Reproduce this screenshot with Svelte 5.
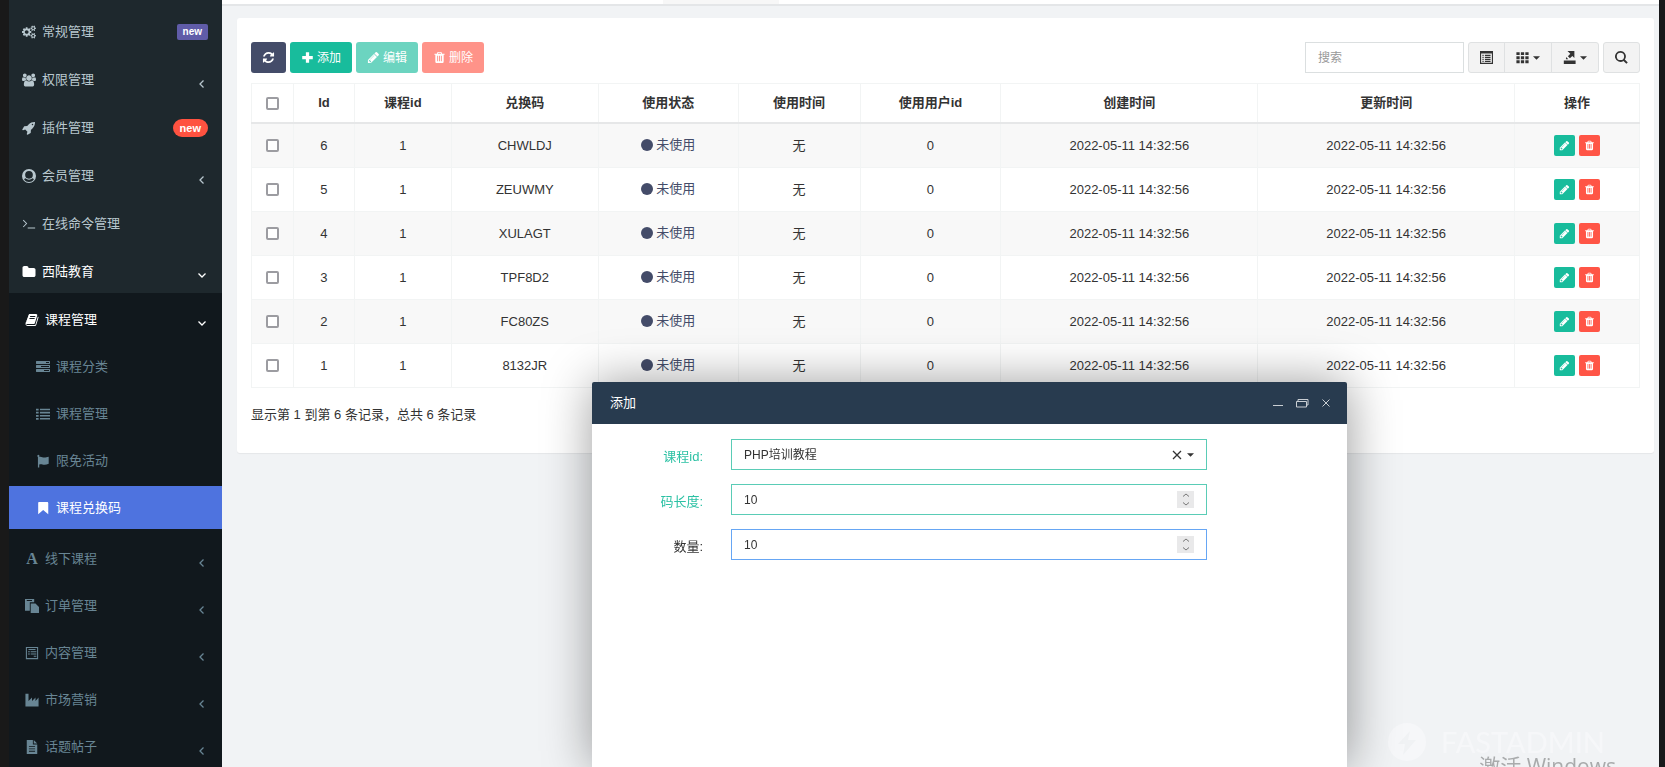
<script>
	const icons = {
		cogs: {
			box: '0 0 1920 1792',
			d: 'M896 896q0-106-75-181t-181-75-181 75-75 181 75 181 181 75 181-75 75-181zm768 512q0-52-38-90t-90-38-90 38-38 90q0 53 37.5 90.5t90.5 37.5 90.5-37.5 37.5-90.5zm0-1024q0-52-38-90t-90-38-90 38-38 90q0 53 37.5 90.5t90.5 37.5 90.5-37.5 37.5-90.5zm-384 421v185q0 10-7 19.5t-16 10.5l-155 24q-11 35-32 76 34 48 90 115 7 11 7 20 0 12-7 19-23 30-82.5 89.5t-78.5 59.5q-11 0-21-7l-115-90q-37 19-77 31-11 108-23 155-7 24-30 24h-186q-11 0-20-7.5t-10-17.5l-23-153q-34-10-75-31l-118 89q-7 7-20 7-11 0-21-8-144-133-144-160 0-9 7-19 10-14 41-53t47-61q-23-44-35-82l-152-24q-10-1-17-9.5t-7-19.5v-185q0-10 7-19.5t16-10.5l155-24q11-35 32-76-34-48-90-115-7-11-7-20 0-12 7-20 22-30 82-89t79-59q11 0 21 7l115 90q34-18 77-32 11-108 23-154 7-24 30-24h186q11 0 20 7.5t10 17.5l23 153q34 10 75 31l118-89q8-7 20-7 11 0 21 8 144 133 144 160 0 8-7 19-12 16-42 54t-45 60q23 48 34 82l152 23q10 2 17 10.5t7 19.5zm640 533v140q0 16-149 31-12 27-30 52 51 113 51 138 0 4-4 7-122 71-124 71-8 0-46-47t-52-68q-20 2-30 2t-30-2q-14 21-52 68t-46 47q-2 0-124-71-4-3-4-7 0-25 51-138-18-25-30-52-149-15-149-31v-140q0-16 149-31 13-29 30-52-51-113-51-138 0-4 4-7 4-2 35-20t59-34 30-16q8 0 46 46.5t52 67.5q20-2 30-2t30 2q51-71 92-112l6-2q4 0 124 70 4 3 4 7 0 25-51 138 17 23 30 52 149 15 149 31zm0-1024v140q0 16-149 31-12 27-30 52 51 113 51 138 0 4-4 7-122 71-124 71-8 0-46-47t-52-68q-20 2-30 2t-30-2q-14 21-52 68t-46 47q-2 0-124-71-4-3-4-7 0-25 51-138-18-25-30-52-149-15-149-31v-140q0-16 149-31 13-29 30-52-51-113-51-138 0-4 4-7 4-2 35-20t59-34 30-16q8 0 46 46.5t52 67.5q20-2 30-2t30 2q51-71 92-112l6-2q4 0 124 70 4 3 4 7 0 25-51 138 17 23 30 52 149 15 149 31z'
		},
		users: {
			box: '0 0 1920 1792',
			d: 'M593 896q-162 5-265 128H194q-82 0-138-40.5T0 865q0-353 124-353 6 0 43.5 21t97.5 42.5T384 597q67 0 133-23-5 37-5 66 0 139 81 256zm1071 637q0 120-73 189.5t-194 69.5H523q-121 0-194-69.5T256 1533q0-53 3.5-103.5t14-109T300 1212t43-97.5 62-81 85.5-53.5T602 960q10 0 43 21.5t73 48 107 48 135 21.5 135-21.5 107-48 73-48 43-21.5q61 0 111.5 20t85.5 53.5 62 81 43 97.5 26.5 108.5 14 109 3.5 103.5zM640 256q0 106-75 181t-181 75-181-75-75-181 75-181T384 0t181 75 75 181zm704 384q0 159-112.5 271.5T960 1024 688.5 911.5 576 640t112.5-271.5T960 256t271.5 112.5T1344 640zm576 225q0 78-56 118.5t-138 40.5h-134q-103-123-265-128 81-117 81-256 0-29-5-66 66 23 133 23 59 0 119-21.5t97.5-42.5 43.5-21q124 0 124 353zm-128-609q0 106-75 181t-181 75-181-75-75-181 75-181 181-75 181 75 75 181z'
		},
		rocket: {
			box: '0 0 1792 1792',
			d: 'M1440 448q0-40-28-68t-68-28-68 28-28 68 28 68 68 28 68-28 28-68zm224-288q0 249-75.5 430.5t-253.5 360.5q-81 80-195 176l-20 379q-2 16-16 26l-384 224q-7 4-16 4-12 0-23-9l-64-64q-13-14-8-32l85-276-281-281-276 85q-3 1-9 1-14 0-23-9l-64-64q-17-19-5-39l224-384q10-14 26-16l379-20q96-114 176-195 188-187 358-258t431-71q14 0 24 9.5t10 22.5z'
		},
		user: {
			box: '0 0 16 16',
			d: 'M8 0a8 8 0 1 1 0 16A8 8 0 0 1 8 0zM8 2.200a4.400 4.400 0 1 0 0 8.800 4.400 4.400 0 0 0 0-8.800zM4 10.600C3 10.900 2.700 11.500 2.500 12.300A6.900 6.900 0 0 0 8 14.900a6.900 6.900 0 0 0 5.500-2.600C13.300 11.500 13 10.900 12 10.600a5.700 5.700 0 0 1-8 0z'
		},
		terminal: {
			box: '0 0 16 16',
			d: 'M1 4l.8-.8L6 7.5 1.8 11.800 1 11l3.500-3.500zM6.500 12H15v1.200H6.500z'
		},
		folder: {
			box: '0 0 1792 1792',
			d: 'M1728 608v704q0 92-66 158t-158 66H288q-92 0-158-66t-66-158V352q0-92 66-158t158-66h320q92 0 158 66t66 158v32h672q92 0 158 66t66 158z'
		},
		book: {
			box: '0 0 1792 1792',
			d: 'M1703 478q40 57 18 129l-275 906q-19 64-76.5 107.5T1247 1664H324q-77 0-148.500-53.500T76 1479q-24-67-2-127 0-4 3-27t4-37q1-8-3-21.500t-3-19.500q2-11 8-21t16.500-23.500T116 1179q23-38 45-91.500t30-91.500q3-10 .5-30t-.5-28q3-11 17-28t17-23q21-36 42-92t25-90q1-9-2.500-32t.5-28q4-13 22-30.500t22-22.500q19-26 42.500-84.500T404 411q1-8-3-25.500t-2-26.500q2-8 9-18t18-23 17-21q8-12 16.500-30.500t15-35 16-36 19.500-32 26.500-23.500 36-11.500T620 134l-1 3q38-9 51-9h761q74 0 114 56t18 130l-274 906q-36 119-71.500 153.500T1089 1408H220q-27 0-38 15-11 16-1 43 24 70 144 70h923q29 0 56-15.500t35-41.500l300-987q7-22 5-57 38 15 59 43zm-1064 2q-4 13 2 22.500t20 9.500h608q13 0 25.500-9.500T1311 480l21-64q4-13-2-22.500t-20-9.500H702q-13 0-25.500 9.500T660 416zm-83 256q-4 13 2 22.500t20 9.500h608q13 0 25.500-9.500t16.500-22.500l21-64q4-13-2-22.500t-20-9.500H619q-13 0-25.500 9.500T577 672z'
		},
		tasks: {
			box: '0 0 1792 1792',
			d: 'M1024 1408h640v-128h-640v128zm-384-512h1024V768H640v128zm640-512h384V256h-384v128zm512 832v256q0 26-19 45t-45 19H64q-26 0-45-19t-19-45v-256q0-26 19-45t45-19h1664q26 0 45 19t19 45zm0-512v256q0 26-19 45t-45 19H64q-26 0-45-19T0 960V704q0-26 19-45t45-19h1664q26 0 45 19t19 45zm0-512v256q0 26-19 45t-45 19H64q-26 0-45-19T0 448V192q0-26 19-45t45-19h1664q26 0 45 19t19 45z'
		},
		list: {
			box: '0 0 16 16',
			d: 'M0 2h3v2H0zm0 3.500h3v2H0zM0 9h3v2H0zm0 3.500h3v2H0zM4.500 2H16v1.800H4.500zm0 3.500H16v1.800H4.500zm0 3.500H16v1.800H4.500zm0 3.500H16v1.800H4.500z'
		},
		flag: {
			box: '0 0 16 16',
			d: 'M2.500.8a1.500 1.500 0 0 1 1 2.600c2.500-1 4 .9 6.200.7 1.500-.1 2.800-.6 4.800-1.100v8.200c-2 .7-3.500 1.200-5 1.100-2.200-.1-3.500-1.300-5.800-.3V15.500H2.200V3.500A1.500 1.500 0 0 1 2.500.8z'
		},
		bookmark: {
			box: '0 0 16 16',
			d: 'M3.500 1h9.300c.7 0 1.200.5 1.200 1.200V15L8.200 10.300 2.500 15V2.200c0-.7.400-1.200 1-1.200z'
		},
		paste: {
			box: '0 0 16 16',
			d: 'M0 0h10.500v3.800H5.500V13.500H0zM2 1.200v1h6v-1zM6.500 5h5.500l4 4v7H6.500zM11 6.200V10h3.800v4.800H14.800V10H11z'
		},
		form: {
			box: '0 0 16 16',
			d: 'M1 1h14v14H1zm1.200 1.200v11.600h11.600V2.200zM4 3.500h8v1.200H4zM3.500 6h2v1.200h-2zm3 0H13v1.200H6.500zm-3 2.500h2v1.200h-2zm3 0H13v1.200H6.500zm3.500 2.500h3v1.200h-3z'
		},
		industry: {
			box: '0 0 16 16',
			d: 'M.5.800h3.500v8.200l4-3.800V9l4-3.800V9l3.500-3.800V15.500H.5z'
		},
		file: {
			box: '0 0 16 16',
			d: 'M2 0h7v5h5v11H2zm8 0l4 4h-4zM4.500 7v1.100h7V7zm0 2.600v1.100h7V9.600zm0 2.600v1.100h7v-1.100z'
		},
		refresh: {
			box: '0 0 1792 1792',
			d: 'M1639 1056q0 5-1 7-64 268-268 434.500T892 1664q-146 0-282.500-55T366 1452l-129 129q-19 19-45 19t-45-19-19-45v-448q0-26 19-45t45-19h448q26 0 45 19t19 45-19 45l-137 137q71 66 161 102t187 36q134 0 250-65t186-179q11-17 53-117 8-23 30-23h192q13 0 22.500 9.500t9.500 22.500zm25-800v448q0 26-19 45t-45 19h-448q-26 0-45-19t-19-45 19-45l138-138Q1097 384 896 384q-134 0-250 65T460 628q-11 17-53 117-8 23-30 23H178q-13 0-22.500-9.500T146 736v-7q65-268 270-434.500T896 128q146 0 284 55.500T1425 340l130-129q19-19 45-19t45 19 19 45z'
		},
		plus: {
			box: '0 0 16 16',
			d: 'M6 1.500h4V6h4.500v4H10v4.500H6V10H1.500V6H6z'
		},
		pencil: {
			box: '0 0 1792 1792',
			d: 'M491 1536l91-91-235-235-91 91v107h128v128h107zm523-928q0-22-22-22-10 0-17 7l-542 542q-7 7-7 17 0 22 22 22 10 0 17-7l542-542q7-7 7-17zm-54-192l416 416-832 832H128v-416zm683 96q0 53-37 90l-166 166-416-416 166-165q36-38 90-38 53 0 91 38l235 234q37 39 37 91z'
		},
		trash: {
			box: '0 0 1792 1792',
			d: 'M704 1376V672q0-14-9-23t-23-9h-64q-14 0-23 9t-9 23v704q0 14 9 23t23 9h64q14 0 23-9t9-23zm256 0V672q0-14-9-23t-23-9h-64q-14 0-23 9t-9 23v704q0 14 9 23t23 9h64q14 0 23-9t9-23zm256 0V672q0-14-9-23t-23-9h-64q-14 0-23 9t-9 23v704q0 14 9 23t23 9h64q14 0 23-9t9-23zM672 384h448l-48-117q-7-9-17-11H738q-10 2-17 11zm928 32v64q0 14-9 23t-23 9h-96v948q0 83-47 143.500t-113 60.500H480q-66 0-113-58.500T320 1464V512h-96q-14 0-23-9t-9-23v-64q0-14 9-23t23-9h309l70-167q15-37 54-63t79-26h320q40 0 79 26t54 63l70 167h309q14 0 23 9t9 23z'
		},
		listAlt: {
			box: '0 0 16 16',
			d: 'M0 0h16v16H0zm1.400 3v11.600h13.200V3zM3 4.500h1.500V6H3zm3 0h7V6H6zM3 7h1.500v1.500H3zm3 0h7v1.500H6zM3 9.500h1.500V11H3zm3 0h7V11H6zM3 12h1.500v1.500H3zm3 0h7v1.500H6z'
		},
		grid: {
			box: '0 0 16 16',
			d: 'M.5 1.500h4v3.500h-4zm5.500 0h4v3.500H6zm5.500 0h4v3.500h-4zm-11 5h4V10h-4zm5.500 0h4V10H6zm5.500 0h4V10h-4zm-11 5h4V15h-4zm5.500 0h4V15H6zm5.500 0h4V15h-4z'
		},
		exportIcon: {
			box: '0 0 16 16',
			d: 'M5.500 0H14v8.500l-2.500-2.500-3 3L6 6.500l3-3zM4 7.500L6.500 10H3.500zM1 11.800h14.500V16H1z'
		},
		search: {
			box: '0 0 16 16',
			d: 'M6.700 0a6.700 6.700 0 0 1 5.400 10.600l3.600 3.500-1.700 1.700-3.600-3.500A6.700 6.700 0 1 1 6.700 0zm0 2.200a4.500 4.500 0 1 0 0 9 4.500 4.500 0 0 0 0-9z'
		}
	};

	const topMenu = [
		{ icon: 'cogs', label: '常规管理', badge: 'purple' },
		{ icon: 'users', label: '权限管理', arrow: 'left' },
		{ icon: 'rocket', label: '插件管理', badge: 'red' },
		{ icon: 'user', label: '会员管理', arrow: 'left' },
		{ icon: 'terminal', label: '在线命令管理' },
		{ icon: 'folder', label: '西陆教育', arrow: 'down', open: true }
	];

	const courseMenu = [
		{ icon: 'tasks', label: '课程分类' },
		{ icon: 'list', label: '课程管理' },
		{ icon: 'flag', label: '限免活动' },
		{ icon: 'bookmark', label: '课程兑换码', active: true }
	];

	const subMenu = [
		{ icon: 'book', label: '课程管理', arrow: 'down', open: true, children: courseMenu },
		{ icon: 'font', label: '线下课程', arrow: 'left' },
		{ icon: 'paste', label: '订单管理', arrow: 'left' },
		{ icon: 'form', label: '内容管理', arrow: 'left' },
		{ icon: 'industry', label: '市场营销', arrow: 'left' },
		{ icon: 'file', label: '话题帖子', arrow: 'left' }
	];

	const columns = [
		{ title: '', share: 42 },
		{ title: 'Id', share: 61 },
		{ title: '课程id', share: 97 },
		{ title: '兑换码', share: 147 },
		{ title: '使用状态', share: 140 },
		{ title: '使用时间', share: 122 },
		{ title: '使用用户id', share: 141 },
		{ title: '创建时间', share: 257 },
		{ title: '更新时间', share: 257 },
		{ title: '操作', share: 125 }
	];
	const total = columns.reduce((sum, c) => sum + c.share, 0);

	const time = '2022-05-11 14:32:56';
	const rows = [
		{ id: 6, code: 'CHWLDJ' },
		{ id: 5, code: 'ZEUWMY' },
		{ id: 4, code: 'XULAGT' },
		{ id: 3, code: 'TPF8D2' },
		{ id: 2, code: 'FC80ZS' },
		{ id: 1, code: '8132JR' }
	];

	let selected = $state([]);
	let keyword = $state('');
	let course = $state('php');
	let codeLength = $state(10);
	let count = $state(10);

	function toggleAll(e) {
		selected = e.currentTarget.checked ? rows.map((r) => r.id) : [];
	}
</script>

{#snippet icon(name)}
	{#if name === 'font'}
		<span class="icon letter" aria-hidden="true">A</span>
	{:else}
		<svg class="icon" viewBox={icons[name].box} fill="currentColor" fill-rule="evenodd" aria-hidden="true">
			<path d={icons[name].d} />
		</svg>
	{/if}
{/snippet}

{#snippet caret()}
	<svg class="caret" viewBox="0 0 8 4" aria-hidden="true"><path d="M0 0h8L4 4z" fill="currentColor" /></svg>
{/snippet}

{#snippet link(item)}
	<a href="#menu" class:open={item.open} class:active={item.active}>
		{@render icon(item.icon)}
		<span class="label">{item.label}</span>
		{#if item.badge}
			<span class="badge {item.badge}">new</span>
		{:else if item.arrow}
			<svg class="arrow" viewBox="0 0 10 10" fill="none" stroke="currentColor" stroke-width="1.3" aria-hidden="true">
				<path d={item.arrow === 'left' ? 'M6.500 1.500L3 5l3.500 3.500' : 'M1.500 2.500L5 6l3.500-3.500'} />
			</svg>
		{/if}
	</a>
{/snippet}

{#snippet spinner(up, down)}
	<span class="spinner">
		<button type="button" aria-label="增加" onclick={up}>
			<svg viewBox="0 0 8 4" fill="none" stroke="currentColor" aria-hidden="true"><path d="M1 3.500l3-2.500 3 2.500" /></svg>
		</button>
		<button type="button" aria-label="减少" onclick={down}>
			<svg viewBox="0 0 8 4" fill="none" stroke="currentColor" aria-hidden="true"><path d="M1 .5L4 3 7 .5" /></svg>
		</button>
	</span>
{/snippet}

<div class="page">
	<nav class="sidebar">
		<ul class="menu">
			{#each topMenu as item}
				<li>{@render link(item)}</li>
			{/each}
		</ul>
		<ul class="submenu">
			{#each subMenu as item}
				<li>
					{@render link(item)}
					{#if item.children}
						<ul class="nested">
							{#each item.children as child}
								<li>{@render link(child)}</li>
							{/each}
						</ul>
					{/if}
				</li>
			{/each}
		</ul>
	</nav>

	<main>
		<div class="topbar"><span class="tab"></span></div>
		<section class="panel">
			<div class="toolbar">
				<button class="btn dark" type="button" aria-label="刷新">{@render icon('refresh')}</button>
				<button class="btn green" type="button">{@render icon('plus')}添加</button>
				<button class="btn green" type="button" disabled={!selected.length}>{@render icon('pencil')}编辑</button>
				<button class="btn red" type="button" disabled={!selected.length}>{@render icon('trash')}删除</button>
				<input class="search" type="text" placeholder="搜索" aria-label="搜索" bind:value={keyword} />
				<div class="group">
					<button type="button" aria-label="切换">{@render icon('listAlt')}</button>
					<button type="button" aria-label="列">{@render icon('grid')}{@render caret()}</button>
					<button type="button" aria-label="导出">{@render icon('exportIcon')}{@render caret()}</button>
				</div>
				<div class="group">
					<button type="button" aria-label="普通搜索">{@render icon('search')}</button>
				</div>
			</div>

			<table>
				<colgroup>
					{#each columns as col}
						<col style="width: {(col.share / total) * 100}%" />
					{/each}
				</colgroup>
				<thead>
					<tr>
						{#each columns as col, i}
							<th>
								{#if i === 0}
									<input type="checkbox" aria-label="全选" checked={selected.length === rows.length} onchange={toggleAll} />
								{:else}
									{col.title}
								{/if}
							</th>
						{/each}
					</tr>
				</thead>
				<tbody>
					{#each rows as row (row.id)}
						<tr>
							<td><input type="checkbox" aria-label="选择 {row.id}" value={row.id} bind:group={selected} /></td>
							<td>{row.id}</td>
							<td>1</td>
							<td>{row.code}</td>
							<td><span class="status"><span class="dot"></span>未使用</span></td>
							<td>无</td>
							<td>0</td>
							<td>{time}</td>
							<td>{time}</td>
							<td>
								<div class="actions">
									<button class="green" type="button" aria-label="编辑">{@render icon('pencil')}</button>
									<button class="red" type="button" aria-label="删除">{@render icon('trash')}</button>
								</div>
							</td>
						</tr>
					{/each}
				</tbody>
			</table>
			<p class="summary">显示第 1 到第 6 条记录，总共 6 条记录</p>
		</section>
	</main>

	<div class="watermark" aria-hidden="true">
		<svg viewBox="0 0 38 38">
			<circle cx="19" cy="19" r="19" fill="#f6f7f9" />
			<path d="M22 8L10 21h7l-2 11 13-15h-8z" fill="#f0f2f4" />
		</svg>
		<span>FASTADMIN</span>
	</div>
	<div class="activate">激活 Windows</div>

	<div class="dialog" role="dialog" aria-labelledby="dialog-title">
		<header>
			<h2 id="dialog-title">添加</h2>
			<button type="button" aria-label="最小化">
				<svg viewBox="0 0 14 14" fill="none" stroke="currentColor" aria-hidden="true"><path d="M2 9.500h10" /></svg>
			</button>
			<button type="button" aria-label="最大化">
				<svg viewBox="0 0 14 14" fill="none" stroke="currentColor" aria-hidden="true">
					<path d="M1.500 5.500h10v5.500h-10zM3 5V3.500h10V9h-1.500" />
				</svg>
			</button>
			<button type="button" aria-label="关闭">
				<svg viewBox="0 0 14 14" fill="none" stroke="currentColor" aria-hidden="true"><path d="M3.500 3.500l7 7m0-7l-7 7" /></svg>
			</button>
		</header>
		<form>
			<label class="valid" for="course">课程id:</label>
			<div class="field valid">
				<select id="course" bind:value={course}>
					<option value=""></option>
					<option value="php">PHP培训教程</option>
				</select>
				<span class="picker">
					<button type="button" aria-label="清除" onclick={() => (course = '')}>
						<svg viewBox="0 0 10 10" stroke="currentColor" stroke-width="1.3" aria-hidden="true"><path d="M1 1l8 8m0-8L1 9" /></svg>
					</button>
					{@render caret()}
				</span>
			</div>
			<label class="valid" for="length">码长度:</label>
			<div class="field valid">
				<input id="length" type="number" bind:value={codeLength} />
				{@render spinner(() => codeLength++, () => codeLength--)}
			</div>
			<label for="count">数量:</label>
			<div class="field focused">
				<input id="count" type="number" bind:value={count} />
				{@render spinner(() => count++, () => count--)}
			</div>
		</form>
	</div>
</div>

<style>
	:global(body) {
		overflow: hidden;
		background: #f1f3f5;
		font: 13px/20px 'Liberation Sans', 'Noto Sans CJK SC', sans-serif;
		color: #333;
	}

	button,
	input,
	select {
		margin: 0;
		font: inherit;
		color: inherit;
		box-sizing: border-box;
	}

	button {
		display: inline-flex;
		align-items: center;
		justify-content: center;
		padding: 0;
		border: none;
		background: none;
		cursor: pointer;
	}

	.page {
		display: flex;
		height: 100vh;
		overflow: hidden;
		box-sizing: border-box;
		border-left: 9px solid #191919;
		border-right: 6px solid #17181a;
	}

	.icon {
		width: 13px;
		height: 13px;
		flex-shrink: 0;
	}

	.caret {
		width: 7px;
		height: 4px;
	}

	/* sidebar */
	.sidebar {
		width: 213px;
		flex-shrink: 0;
		background: #1e282d;
		color: #b8c7ce;
	}

	.sidebar ul {
		margin: 0;
		padding: 0;
		list-style: none;
	}

	.sidebar a {
		display: flex;
		align-items: center;
		gap: 6px;
		height: 48px;
		padding: 5px 14px 0 13px;
		color: inherit;
		text-decoration: none;
		box-sizing: border-box;
	}

	.sidebar .menu {
		padding-top: 5px;
	}

	.sidebar .icon {
		width: 14px;
		height: 14px;
	}

	.sidebar .letter {
		font: bold 16px/14px 'Liberation Serif', serif;
		text-align: center;
	}

	.label {
		flex: 1;
	}

	.sidebar a.open {
		color: #fff;
	}

	.arrow {
		width: 10px;
		height: 10px;
		margin: 8px 1px 0 0;
	}

	.badge {
		padding: 0 6px;
		border-radius: 2px;
		font: bold 10px/16px 'Liberation Sans', sans-serif;
		color: #fff;
	}

	.badge.purple {
		background: #605ca8;
	}

	.badge.red {
		padding: 0 7px;
		border-radius: 9px;
		font-size: 11px;
		line-height: 18px;
		background: #ff5240;
	}

	.sidebar .submenu {
		display: flex;
		flex-direction: column;
		gap: 4px;
		height: 100%;
		padding-top: 5px;
		background: #11181d;
		color: #688594;
	}

	.sidebar .submenu a {
		height: 43px;
		padding: 0 14px 0 16px;
	}

	.sidebar .nested {
		display: flex;
		flex-direction: column;
		gap: 4px;
		padding: 4px 0;
	}

	.sidebar .nested a {
		padding-left: 27px;
	}

	.sidebar a.active {
		background: #4e73df;
		color: #fff;
	}

	/* content */
	main {
		flex: 1;
		min-width: 0;
	}

	.topbar {
		height: 4px;
		border-bottom: 2px solid #e4e6e8;
		background: #fff;
	}

	.tab {
		display: block;
		width: 116px;
		height: 4px;
		margin-left: 441px;
		background: #f7f7f7;
	}

	.panel {
		margin: 12px 5px 0 15px;
		padding: 24px 14px 28px;
		border-radius: 3px;
		background: #fff;
		box-shadow: 0 1px 1px rgba(0, 0, 0, 0.05);
	}

	.toolbar {
		display: flex;
		gap: 4px;
		margin-bottom: 10px;
		font-size: 12px;
	}

	.btn {
		gap: 3px;
		height: 31px;
		padding: 0 11px;
		border-radius: 3px;
		color: #fff;
	}

	.btn:disabled {
		opacity: 0.63;
		cursor: not-allowed;
	}

	.dark {
		background: #444c69;
	}

	.green {
		background: #18bc9c;
	}

	.red {
		background: #ff5546;
	}

	.search {
		width: 159px;
		height: 31px;
		margin-left: auto;
		padding: 0 12px;
		border: 1px solid #dbdfe0;
		border-radius: 0;
		background: #fff;
		outline: none;
	}

	.search::placeholder {
		color: #999;
		opacity: 1;
	}

	.group {
		display: flex;
		height: 31px;
		border: 1px solid #dfe1e2;
		border-radius: 3px;
		background: #f3f3f3;
		box-sizing: border-box;
	}

	.group button {
		gap: 4px;
		padding: 0 11px;
	}

	.group button + button {
		border-left: 1px solid #dfe1e2;
	}

	table {
		width: 100%;
		table-layout: fixed;
		border-collapse: collapse;
		border: 1px solid #f2f4f4;
	}

	th,
	td {
		padding: 0;
		border: 1px solid #f2f4f4;
		text-align: center;
	}

	th {
		height: 38px;
		border-bottom: 2px solid #e6e7e8;
		font-weight: bold;
	}

	td {
		height: 43px;
	}

	tbody tr:nth-child(odd) {
		background: #f8f8f8;
	}

	input[type='checkbox'] {
		display: block;
		width: 13px;
		height: 13px;
		margin: 0 auto;
		border: 2px solid #9c9ca1;
		border-radius: 2px;
		background: #fff;
		appearance: none;
	}

	input[type='checkbox']:checked {
		border-color: #4e73df;
		background: #4e73df;
	}

	.status {
		display: inline-flex;
		align-items: center;
		gap: 3px;
		color: #444c69;
	}

	.dot {
		width: 12px;
		height: 12px;
		border-radius: 50%;
		background: #444c69;
	}

	.actions {
		display: flex;
		justify-content: center;
		gap: 4px;
		color: #fff;
	}

	.actions button {
		width: 21px;
		height: 21px;
		border-radius: 2px;
	}

	.actions .icon {
		width: 11px;
		height: 11px;
	}

	.summary {
		margin: 17px 0 0;
	}

	/* overlays */
	.watermark {
		position: fixed;
		right: 60px;
		bottom: 6px;
		display: flex;
		align-items: center;
		gap: 15px;
		font: 29px/38px Lato, sans-serif;
		color: #f6f7f9;
	}

	.watermark svg {
		width: 38px;
		height: 38px;
	}

	.activate {
		position: fixed;
		right: 49px;
		bottom: -13px;
		font: 21px/28px 'Open Sans', 'Noto Sans CJK SC', sans-serif;
		color: #a9abac;
	}

	.dialog {
		position: fixed;
		top: 382px;
		right: 318px;
		bottom: 0;
		left: 592px;
		border-radius: 2px 2px 0 0;
		background: #fff;
		box-shadow: 1px 1px 50px rgba(0, 0, 0, 0.4);
	}

	.dialog header {
		display: flex;
		align-items: center;
		gap: 10px;
		height: 42px;
		padding: 0 14px 0 18px;
		border-radius: 2px 2px 0 0;
		background: #283b4f;
		color: #fff;
	}

	.dialog h2 {
		flex: 1;
		margin: 0;
		font-size: 13px;
		font-weight: normal;
	}

	.dialog header svg {
		width: 14px;
		height: 14px;
		color: #c9ced3;
	}

	form {
		display: grid;
		grid-template-columns: 111px 1fr;
		gap: 14px 28px;
		padding: 15px 140px 0 0;
	}

	label {
		padding-top: 8px;
		text-align: right;
	}

	label.valid {
		color: #2cc1a4;
	}

	.field {
		display: flex;
		align-items: center;
		position: relative;
		height: 31px;
		border: 1px solid #ccc;
		box-sizing: border-box;
		font-size: 12px;
	}

	.field.valid {
		border-color: #5accb6;
	}

	.field.focused {
		border-color: #66a6f4;
	}

	.field input,
	.field select {
		width: 100%;
		height: 100%;
		padding: 0 12px;
		border: none;
		background: transparent;
		outline: none;
		appearance: none;
	}

	.field input {
		appearance: textfield;
	}

	.field input::-webkit-inner-spin-button {
		appearance: none;
	}

	.picker,
	.spinner {
		position: absolute;
		right: 12px;
		display: flex;
		align-items: center;
	}

	.picker {
		gap: 5px;
	}

	.picker button svg {
		display: block;
		width: 10px;
		height: 10px;
	}

	.spinner {
		flex-direction: column;
		width: 17px;
		height: 17px;
		background: #e9e9ea;
		color: #777;
	}

	.spinner button {
		flex: 1;
	}

	.spinner svg {
		width: 8px;
		height: 4px;
	}
</style>
